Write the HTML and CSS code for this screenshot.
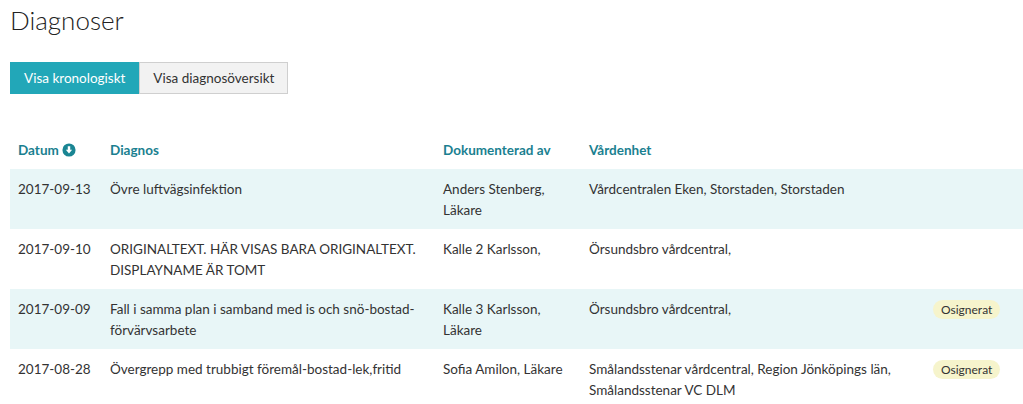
FILE: index.html
```html
<!DOCTYPE html>
<html>
<head>
  <meta charset="UTF-8">
  <title>Diagnoser</title>
  <link rel="stylesheet" href="styles.css">
</head>
<body>
  <h1>Diagnoser</h1>

  <div class="toggle">
    <button class="active">Visa kronologiskt</button>
    <button>Visa diagnosöversikt</button>
  </div>

  <table class="diagnoses">
    <thead>
      <tr>
        <th class="col-date">Datum
          <svg class="sort-icon" viewBox="0 0 16 16">
            <circle cx="8" cy="8" r="7.5" fill="#1a8593"/>
            <path d="M6.6 3.6h2.8v4.2h2.2L8 12 4.4 7.8h2.2z" fill="#fff"/>
          </svg>
        </th>
        <th class="col-diag">Diagnos</th>
        <th class="col-doc">Dokumenterad av</th>
        <th class="col-unit">Vårdenhet</th>
        <th class="col-status"></th>
      </tr>
    </thead>
    <tbody>
      <tr>
        <td>2017-09-13</td>
        <td>Övre luftvägsinfektion</td>
        <td>Anders Stenberg, Läkare</td>
        <td>Vårdcentralen Eken, Storstaden, Storstaden</td>
        <td></td>
      </tr>
      <tr>
        <td>2017-09-10</td>
        <td>ORIGINALTEXT. HÄR VISAS BARA ORIGINALTEXT. DISPLAYNAME ÄR TOMT</td>
        <td>Kalle 2 Karlsson,</td>
        <td>Örsundsbro vårdcentral,</td>
        <td></td>
      </tr>
      <tr>
        <td>2017-09-09</td>
        <td>Fall i samma plan i samband med is och snö-bostad-förvärvsarbete</td>
        <td>Kalle 3 Karlsson, Läkare</td>
        <td>Örsundsbro vårdcentral,</td>
        <td><span class="badge">Osignerat</span></td>
      </tr>
      <tr>
        <td>2017-08-28</td>
        <td>Övergrepp med trubbigt föremål-bostad-lek,fritid</td>
        <td>Sofia Amilon, Läkare</td>
        <td>Smålandsstenar vårdcentral, Region Jönköpings län, Smålandsstenar VC DLM</td>
        <td><span class="badge">Osignerat</span></td>
      </tr>
    </tbody>
  </table>
</body>
</html>
```

FILE: styles.css
```css
body {
  font-family: Lato, "Open Sans", sans-serif;
  margin: 0;
  padding: 0 0 0 10px;
  color: #333;
  background-color: #fff;
}

h1 {
  font-size: 26px;
  font-weight: 300;
  color: #222;
  margin: 0;
  padding-top: 4px;
  line-height: 32px;
}

.toggle {
  display: flex;
  margin-top: 26px;
}

.toggle button {
  font-family: Lato, sans-serif;
  font-size: 13.5px;
  height: 32px;
  padding: 0 13px;
  border: 1px solid #cfcfcf;
  background-color: #f2f2f2;
  color: #333;
  cursor: pointer;
}

.toggle button.active {
  background-color: #22a7b8;
  border-color: #22a7b8;
  color: #fff;
}

.diagnoses {
  width: 100%;
  border-collapse: collapse;
  margin-top: 36px;
  font-size: 13.5px;
  table-layout: fixed;
}

.diagnoses th {
  text-align: left;
  font-weight: 700;
  color: #1a8090;
  padding: 12px 8px 10px;
  line-height: 17px;
}

.col-date { width: 76px; }
.col-diag { width: 317px; }
.col-doc { width: 130px; }
.col-unit { width: 328px; }

.sort-icon {
  width: 14px;
  height: 14px;
  vertical-align: -2px;
}

.diagnoses td {
  vertical-align: top;
  padding: 10px 8px 8px;
  line-height: 21px;
  height: 42px;
  color: #333;
}

.diagnoses tbody tr:nth-child(odd) {
  background-color: #e8f6f7;
}

.badge {
  display: inline-block;
  background-color: #f6f4cc;
  border-radius: 10px;
  padding: 0 8px;
  line-height: 19px;
  font-size: 12px;
  color: #333;
  margin-top: 1px;
}
```
